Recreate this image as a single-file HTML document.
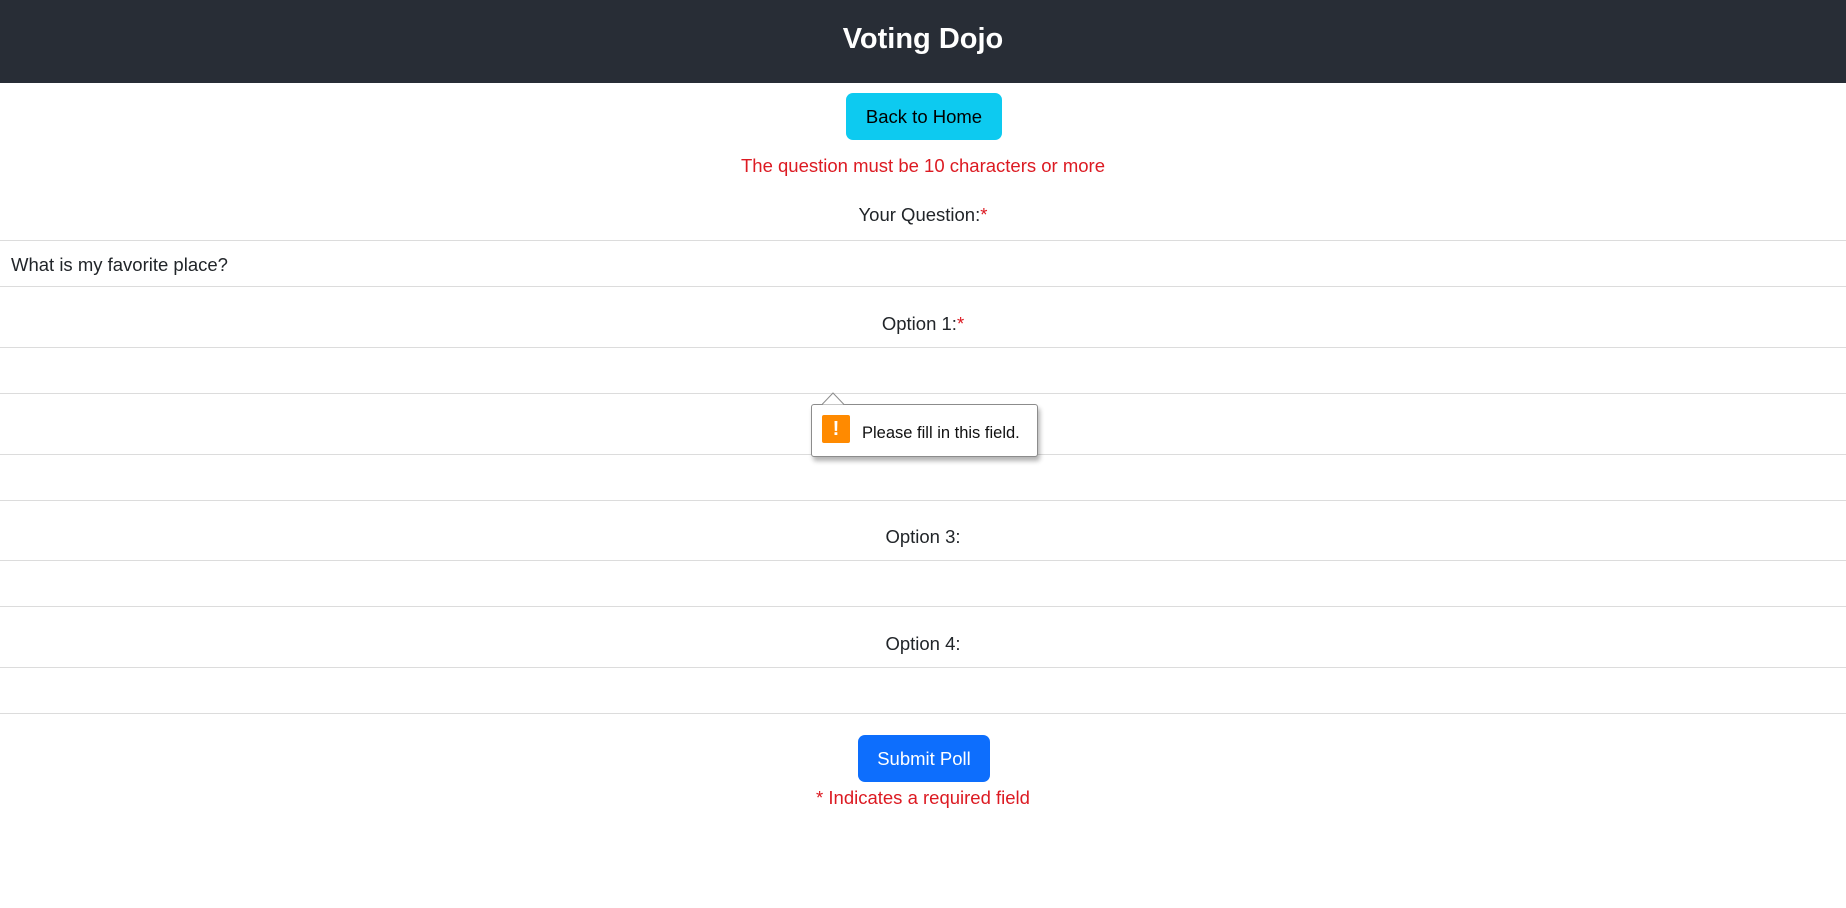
<!DOCTYPE html>
<html><head><meta charset="utf-8"><style>
*{margin:0;padding:0;box-sizing:border-box}
body{width:1846px;height:908px;background:#fff;font-family:"Liberation Sans",sans-serif;color:#212529;position:relative;overflow:hidden}
.hdr{position:absolute;left:0;top:0;width:1846px;height:83px;background:#282d36;color:#fff;font-size:29px;font-weight:bold;text-align:center;line-height:78px}
.c{position:absolute;left:0;width:1846px;text-align:center;font-size:18.5px;line-height:24px}
.red{color:#dc1a22}
.btn{position:absolute;border-radius:7px;font-size:18.5px;text-align:center;line-height:47px;height:47px}
.line{position:absolute;left:0;width:1846px;height:1px;background:#dcdcdc}
.tip{position:absolute;left:811px;top:404px;width:227px;height:53px;background:#fff;border:1px solid #8c8c8c;border-radius:3px;box-shadow:2px 4px 5px rgba(0,0,0,.3)}
</style></head><body>
<div class="hdr">Voting Dojo</div>
<div class="btn" style="left:846px;top:93px;width:156px;background:#0dcaf0;color:#000">Back to Home</div>
<div class="c red" style="top:154px">The question must be 10 characters or more</div>
<div class="c" style="top:203px">Your Question:<span class="red">*</span></div>
<div class="line" style="top:240px"></div>
<div style="position:absolute;left:11px;top:253px;font-size:18.5px;line-height:24px">What is my favorite place?</div>
<div class="line" style="top:286px"></div>
<div class="c" style="top:312px">Option 1:<span class="red">*</span></div>
<div class="line" style="top:347px"></div>
<div class="line" style="top:393px"></div>
<div class="line" style="top:454px"></div>
<div class="line" style="top:500px"></div>
<div class="c" style="top:525px">Option 3:</div>
<div class="line" style="top:560px"></div>
<div class="line" style="top:606px"></div>
<div class="c" style="top:632px">Option 4:</div>
<div class="line" style="top:667px"></div>
<div class="line" style="top:713px"></div>
<div class="btn" style="left:858px;top:735px;width:132px;background:#0d6efd;color:#fff">Submit Poll</div>
<div class="c red" style="top:786px">* Indicates a required field</div>
<div class="tip">
<div style="position:absolute;left:10px;top:10px;width:28px;height:28px;background:#ff8a00;border-radius:2px;color:#fff;font-weight:bold;font-size:20px;line-height:28px;text-align:center">!</div>
<div style="position:absolute;left:50px;top:17px;font-size:16.5px;line-height:22px;color:#111;white-space:nowrap">Please fill in this field.</div>
</div>
<svg style="position:absolute;left:822px;top:392px" width="24" height="13"><path d="M0 12.5 L11 1 L22 12.5" fill="#fff" stroke="#8c8c8c"/></svg>
</body></html>
